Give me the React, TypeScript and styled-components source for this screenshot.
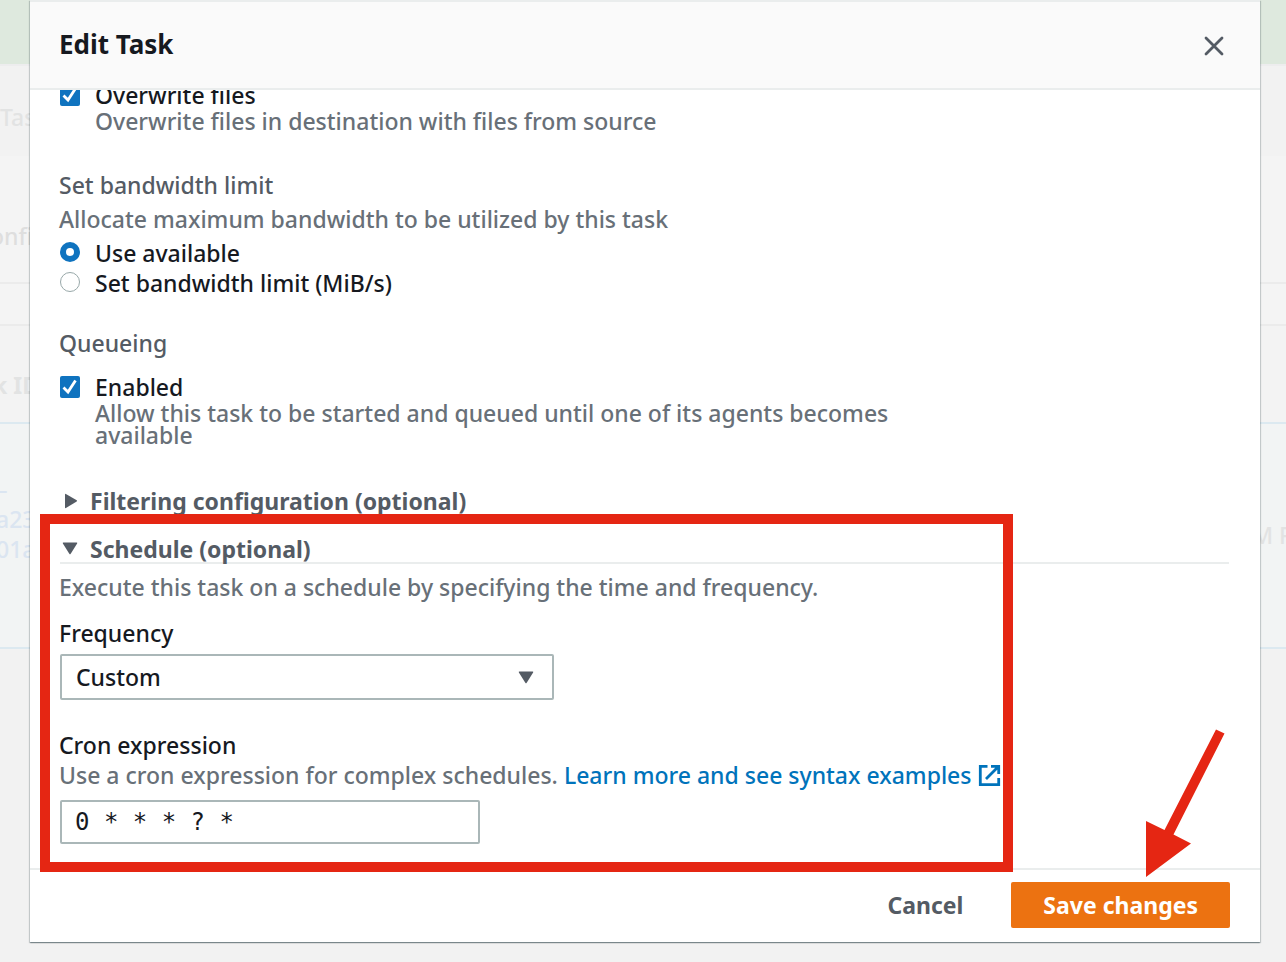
import React, { useState } from "react";
import styled, { createGlobalStyle } from "styled-components";

const color = {
  text: "#16191f",
  label: "#545b64",
  muted: "#687078",
  line: "#eaeded",
  control: "#aab7b8",
  blue: "#0073bb",
  check: "#0f73bf",
  orange: "#ec7211",
  mark: "#e52613",
};

const GlobalStyle = createGlobalStyle`
  *, *::before, *::after { box-sizing: border-box; }
  body {
    margin: 0;
    background: #f2f2f2;
    color: ${color.text};
    font-family: "Noto Sans", "Open Sans", sans-serif;
    font-size: 23px;
    font-weight: 500;
    line-height: 30px;
  }
  input, select, button { font: inherit; color: inherit; margin: 0; }
`;

const Screen = styled.div`
  position: relative;
  height: 100vh;
  overflow: hidden;
`;

const Backdrop = styled.div`
  color: #e2e3e3;
  white-space: nowrap;
`;

const Banner = styled.div`
  height: 64px;
  background: #dee9de;
`;

const Crumbs = styled.div`
  height: 92px;
  padding-top: 36px;
  border-top: 2px solid #ededee;
`;

const PanelTitle = styled.div`
  height: 128px;
  padding-top: 65px;
  background: #f4f4f4;
  border-bottom: 2px solid #ebebeb;
  color: #dedede;
  text-indent: -10px;
`;

const PanelGap = styled.div`
  height: 42px;
  background: #f4f4f4;
  border-bottom: 2px solid #ebebeb;
`;

const TableHead = styled.div`
  height: 96px;
  padding-top: 44px;
  background: #f3f3f3;
  font-weight: 700;
  text-indent: -7px;
`;

const TableRow = styled.div`
  display: flex;
  justify-content: space-between;
  height: 227px;
  padding-top: 50px;
  background: #f2f4f4;
  border: solid #dce9f0;
  border-width: 2px 0;
`;

const TaskId = styled.div`
  margin-left: -4px;
  color: #dbe5f1;
`;

const RowStatus = styled.div`
  width: 34px;
  padding-top: 46px;
`;

const Overlay = styled.div`
  position: absolute;
  inset: 0;
  display: flex;
  padding: 0 26px 20px 30px;
`;

const Modal = styled.section`
  position: relative;
  flex: 1;
  min-width: 0;
  display: flex;
  flex-direction: column;
  background: #fff;
  box-shadow:
    0 1px 1px rgba(0, 28, 36, 0.3),
    1px 1px 1px rgba(0, 28, 36, 0.15),
    -1px 1px 1px rgba(0, 28, 36, 0.15);
`;

const Header = styled.header`
  display: flex;
  align-items: center;
  justify-content: space-between;
  flex: none;
  height: 90px;
  padding: 0 30px 0 29px;
  background: #fafafa;
  border: solid ${color.line};
  border-width: 2px 0;
`;

const Title = styled.h2`
  margin: 0;
  padding-bottom: 2px;
  font-size: 26px;
  font-weight: 700;
`;

const CloseButton = styled.button`
  display: flex;
  padding: 6px 4px 4px;
  border: 0;
  background: none;
  color: ${color.label};
`;

const Body = styled.div`
  flex: 1;
  min-height: 0;
  overflow: hidden;
  display: flex;
  flex-direction: column;
  justify-content: flex-end;
  padding: 0 31px 24px 29px;
`;

const Group = styled.fieldset<{ $after: number; $gap?: number }>`
  display: flex;
  flex-direction: column;
  min-width: 0;
  margin: 0 0 ${(p) => p.$after}px;
  padding: 0;
  border: 0;

  > legend {
    padding: 0;
    margin-bottom: ${(p) => p.$gap ?? 0}px;
    color: ${color.label};
  }
`;

const Hint = styled.p`
  margin: 0;
  color: ${color.muted};
`;

const ScheduleIntro = styled(Hint)`
  margin-bottom: 16px;
`;

const RadioList = styled.div`
  padding-top: 4px;
`;

const Choice = styled.label`
  display: flex;
  gap: 15px;
  padding-left: 1px;
`;

const ChoiceHint = styled.p`
  max-width: 840px;
  margin: 0;
  padding-left: 36px;
  color: ${color.muted};
  line-height: 22px;
`;

const CheckBox = styled.input.attrs({ type: "checkbox" })`
  appearance: none;
  flex: none;
  width: 20px;
  height: 22px;
  margin-top: 4px;
  border: 2px solid ${color.control};
  border-radius: 2px;

  &:checked {
    border: 0;
    background: ${color.check}
      url("data:image/svg+xml,%3Csvg xmlns='http://www.w3.org/2000/svg' viewBox='0 0 20 22'%3E%3Cpath d='M3.500 11.500L8 16L15.500 4.500' fill='none' stroke='white' stroke-width='2.800'/%3E%3C/svg%3E")
      center / 20px 22px no-repeat;
  }
`;

const RadioButton = styled.input.attrs({ type: "radio" })`
  appearance: none;
  flex: none;
  width: 20px;
  height: 20px;
  margin-top: 4px;
  border: 1px solid #98a8a9;
  border-radius: 50%;

  &:checked {
    border: 6px solid ${color.check};
  }
`;

const Expander = styled.button<{ $open?: boolean }>`
  display: flex;
  align-items: center;
  gap: 12px;
  height: ${(p) => (p.$open ? 28 : 30)}px;
  margin: 0 0 ${(p) => (p.$open ? 8 : 20)}px 1px;
  padding: 0 0 0 2px;
  border: 0;
  border-bottom: ${(p) => (p.$open ? `2px solid ${color.line}` : "0")};
  background: none;
  color: ${color.label};
  font-weight: 700;
  text-align: left;

  svg { flex: none; }
`;

const Schedule = styled.section`
  display: flex;
  flex-direction: column;
`;

const Field = styled.div`
  display: flex;
  flex-direction: column;
`;

const SelectWrap = styled.div`
  display: grid;
  align-items: center;
  width: 494px;
  margin: 6px 0 30px 1px;
  color: ${color.label};

  > * { grid-area: 1 / 1; }
  > svg { justify-self: end; margin: 2px 20px 0 0; pointer-events: none; }
`;

const Select = styled.select`
  appearance: none;
  height: 46px;
  padding: 0 14px;
  border: 2px solid ${color.control};
  border-radius: 2px;
  background: #fff;
  && { color: ${color.text}; }
`;

const CronHint = styled.div`
  display: flex;
  gap: 6px;
  color: ${color.muted};
  white-space: nowrap;
`;

const DocsLink = styled.a`
  display: flex;
  align-items: center;
  gap: 6px;
  color: ${color.blue};
  text-decoration: none;
`;

const CronInput = styled.input`
  width: 420px;
  height: 44px;
  margin: 10px 0 0 1px;
  padding: 0 13px;
  border: 2px solid ${color.control};
  border-radius: 2px;
  background: #fff;
  && {
    font-family: "DejaVu Sans Mono", "Liberation Mono", monospace;
    font-size: 24px;
  }
`;

const Footer = styled.footer`
  display: flex;
  justify-content: flex-end;
  gap: 10px;
  flex: none;
  padding: 12px 30px 14px;
  border-top: 2px solid ${color.line};
`;

const Button = styled.button<{ $primary?: boolean }>`
  height: 46px;
  padding: 0 ${(p) => (p.$primary ? 32 : 38)}px;
  border: 0;
  border-radius: 2px;
  background: ${(p) => (p.$primary ? color.orange : "none")};
  color: ${(p) => (p.$primary ? "#fff" : color.label)};
  font-weight: 700;
`;

const Highlight = styled.div`
  position: absolute;
  left: 10px;
  bottom: 70px;
  width: 973px;
  height: 358px;
  border: 10px solid ${color.mark};
  pointer-events: none;
`;

const Pointer = styled.svg`
  position: absolute;
  right: 35px;
  bottom: 65px;
  pointer-events: none;
`;

const Caret = ({ open }: { open?: boolean }) => (
  <svg width="16" height="16" viewBox="0 0 16 16" fill="currentColor" aria-hidden="true">
    {open ? (
      <path d="M1.400 1.500h13.200q1 0 .5.900L8.700 12.800q-.7 1-1.400 0L.9 2.400Q.4 1.500 1.400 1.500z" />
    ) : (
      <path d="M3 1.500q0-1 .9-.5l10.800 6.300q.8.600 0 1.200L3.900 15q-.9.500-.9-.5z" />
    )}
  </svg>
);

const CloseIcon = () => (
  <svg width="24" height="24" viewBox="0 0 24 24" fill="none" stroke="currentColor" strokeWidth="2.800" strokeLinecap="round" aria-hidden="true">
    <path d="M4 4l16 16M20 4L4 20" />
  </svg>
);

const ExternalIcon = () => (
  <svg width="23" height="23" viewBox="0 0 23 23" fill="none" stroke="currentColor" strokeWidth="2.800" aria-hidden="true">
    <path d="M9.500 2.300H2.300v18.400h18.400V14M13 2.300h7.700V10M20.700 2.300L8 15" />
  </svg>
);

export default function App() {
  const [overwrite, setOverwrite] = useState(true);
  const [queueing, setQueueing] = useState(true);
  const [limit, setLimit] = useState("available");
  const [cron, setCron] = useState("0 * * * ? *");

  return (
    <Screen>
      <GlobalStyle />
      <Backdrop aria-hidden="true">
        <Banner />
        <Crumbs>Tas</Crumbs>
        <PanelTitle>onfi</PanelTitle>
        <PanelGap />
        <TableHead>k ID</TableHead>
        <TableRow>
          <TaskId>
            –<br />a23<br />01a
          </TaskId>
          <RowStatus>M P</RowStatus>
        </TableRow>
      </Backdrop>

      <Overlay>
        <Modal role="dialog" aria-labelledby="dialog-title">
          <Header>
            <Title id="dialog-title">Edit Task</Title>
            <CloseButton aria-label="Close">
              <CloseIcon />
            </CloseButton>
          </Header>

          <Body>
            <Group $after={38}>
              <Choice>
                <CheckBox checked={overwrite} onChange={(e) => setOverwrite(e.target.checked)} />
                Overwrite files
              </Choice>
              <ChoiceHint>Overwrite files in destination with files from source</ChoiceHint>
            </Group>

            <Group $after={30} $gap={4}>
              <legend>Set bandwidth limit</legend>
              <Hint>Allocate maximum bandwidth to be utilized by this task</Hint>
              <RadioList>
                <Choice>
                  <RadioButton name="limit" checked={limit === "available"} onChange={() => setLimit("available")} />
                  Use available
                </Choice>
                <Choice>
                  <RadioButton name="limit" checked={limit === "set"} onChange={() => setLimit("set")} />
                  Set bandwidth limit (MiB/s)
                </Choice>
              </RadioList>
            </Group>

            <Group $after={40} $gap={14}>
              <legend>Queueing</legend>
              <Choice>
                <CheckBox checked={queueing} onChange={(e) => setQueueing(e.target.checked)} />
                Enabled
              </Choice>
              <ChoiceHint>Allow this task to be started and queued until one of its agents becomes available</ChoiceHint>
            </Group>

            <Expander aria-expanded="false">
              <Caret />
              Filtering configuration (optional)
            </Expander>

            <Schedule>
              <Expander $open aria-expanded="true">
                <Caret open />
                Schedule (optional)
              </Expander>
              <ScheduleIntro>Execute this task on a schedule by specifying the time and frequency.</ScheduleIntro>
              <Field>
                <label htmlFor="frequency">Frequency</label>
                <SelectWrap>
                  <Select id="frequency" defaultValue="custom">
                    <option value="custom">Custom</option>
                  </Select>
                  <Caret open />
                </SelectWrap>
              </Field>
              <Field>
                <label htmlFor="cron">Cron expression</label>
                <CronHint>
                  Use a cron expression for complex schedules.
                  <DocsLink href="#syntax">
                    Learn more and see syntax examples
                    <ExternalIcon />
                  </DocsLink>
                </CronHint>
                <CronInput id="cron" value={cron} onChange={(e) => setCron(e.target.value)} />
              </Field>
            </Schedule>
          </Body>

          <Footer>
            <Button>Cancel</Button>
            <Button $primary>Save changes</Button>
          </Footer>

          <Highlight />
          <Pointer width="80" height="150" viewBox="0 0 80 150" fill={color.mark} aria-hidden="true">
            <path d="M71 2.500L79.500 6.500L28.500 107.500L46 116.500L1 150V94L19.500 103z" />
          </Pointer>
        </Modal>
      </Overlay>
    </Screen>
  );
}
